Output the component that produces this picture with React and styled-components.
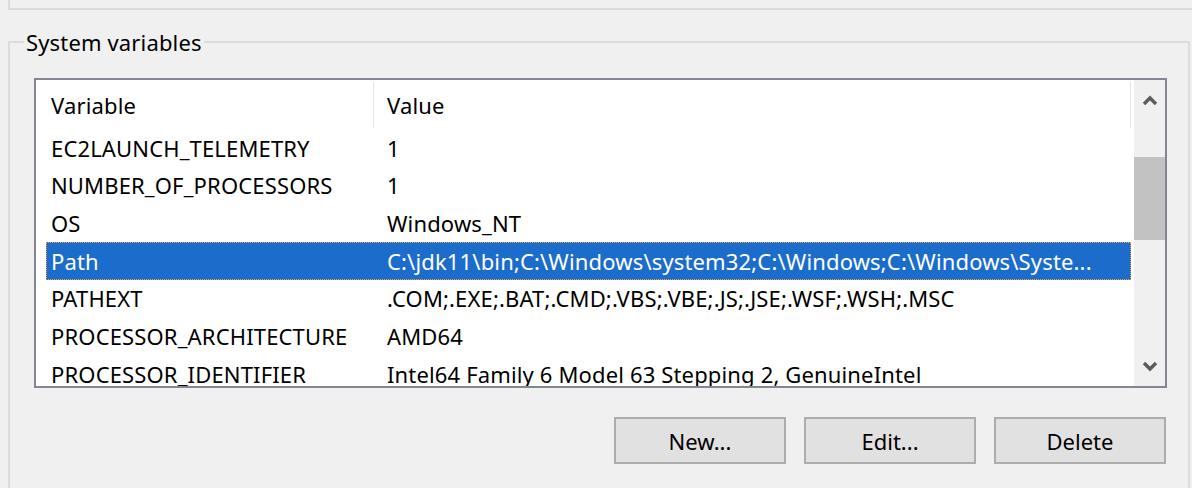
import React from "react";
import styled, { createGlobalStyle } from "styled-components";

const GlobalStyle = createGlobalStyle`
  html, body {
    margin: 0;
    padding: 0;
    background: #f0f0f0;
    overflow: hidden;
  }
  body {
    font-family: "Noto Sans", "Open Sans", "DejaVu Sans", sans-serif;
    font-size: 22px;
    letter-spacing: 0.15px;
    color: #000;
  }
`;

const Page = styled.div`
  width: 1192px;
  height: 488px;
  overflow: hidden;
`;

const TopGroup = styled.div`
  height: 8px;
  margin-left: 8px;
  border-left: 2px solid #dcdcdc;
  border-bottom: 2px solid #dcdcdc;
`;

const Group = styled.fieldset`
  margin: 18px 2px 0 8px;
  padding: 22px 21px 40px 24px;
  border: 2px solid #dcdcdc;
  min-width: 0;
`;

const Legend = styled.legend`
  margin-left: -10px;
  padding: 0 2px;
  line-height: 28px;
`;

const ListBox = styled.div`
  display: flex;
  height: 306px;
  border: 2px solid #828790;
  background: #fff;
`;

const Content = styled.div`
  flex: 1;
  min-width: 0;
  overflow: hidden;
`;

const Header = styled.div`
  display: flex;
  height: 49px;
  padding-right: 3px;
`;

const HeaderCell = styled.div`
  display: flex;
  align-items: center;
  width: ${(p) => (p.$width ? `${p.$width}px` : "auto")};
  flex: ${(p) => (p.$width ? "none" : 1)};
  padding-left: ${(p) => p.$pad}px;
  box-sizing: border-box;
  position: relative;

  &::after {
    content: "";
    position: absolute;
    right: 0;
    top: 2px;
    bottom: 1px;
    width: 1px;
    background: #e5e5e5;
  }
`;

const Rows = styled.div`
  padding: 0 3px 0 10px;
`;

const Row = styled.div`
  display: flex;
  align-items: center;
  height: 37.67px;
  box-sizing: border-box;
  white-space: nowrap;
  color: ${(p) => (p.$selected ? "#fff" : "#000")};
  background: ${(p) => (p.$selected ? "#1c6ccc" : "transparent")};
  border: 1px ${(p) => (p.$selected ? "dotted #f0a040" : "solid transparent")};
`;

const Cell = styled.div`
  width: ${(p) => (p.$width ? `${p.$width}px` : "auto")};
  flex: ${(p) => (p.$width ? "none" : 1)};
  min-width: 0;
  padding-left: ${(p) => p.$pad}px;
  box-sizing: border-box;
  overflow: hidden;
`;

const ScrollBar = styled.div`
  display: flex;
  flex-direction: column;
  width: 31px;
  background: #f0f0f0;
`;

const Arrow = styled.div`
  display: flex;
  align-items: center;
  justify-content: center;
  height: 40px;
  color: #5c5c5c;
`;

const Track = styled.div`
  flex: 1;
`;

const Thumb = styled.div`
  margin-top: 37px;
  height: 83px;
  background: #c2c2c2;
`;

const Buttons = styled.div`
  display: flex;
  justify-content: flex-end;
  gap: 18px;
  margin-top: 29px;
  padding-right: 1px;
`;

const Button = styled.button`
  width: 172px;
  height: 47px;
  border: 2px solid #adadad;
  background: #e1e1e1;
  font: inherit;
  color: #000;
  padding: 0;
`;

const Chevron = ({ up }) => (
  <svg width="16" height="11" viewBox="0 0 16 11">
    <path
      d={up ? "M2 9 L8 3 L14 9" : "M2 2 L8 8 L14 2"}
      fill="none"
      stroke="currentColor"
      strokeWidth="3.4"
    />
  </svg>
);

const rows = [
  ["EC2LAUNCH_TELEMETRY", "1"],
  ["NUMBER_OF_PROCESSORS", "1"],
  ["OS", "Windows_NT"],
  ["Path", "C:\\jdk11\\bin;C:\\Windows\\system32;C:\\Windows;C:\\Windows\\Syste..."],
  ["PATHEXT", ".COM;.EXE;.BAT;.CMD;.VBS;.VBE;.JS;.JSE;.WSF;.WSH;.MSC"],
  ["PROCESSOR_ARCHITECTURE", "AMD64"],
  ["PROCESSOR_IDENTIFIER", "Intel64 Family 6 Model 63 Stepping 2, GenuineIntel"],
];

export default function App() {
  return (
    <Page>
      <GlobalStyle />
      <TopGroup />
      <Group>
        <Legend>System variables</Legend>
        <ListBox>
          <Content>
            <Header>
              <HeaderCell $width={338} $pad={15}>Variable</HeaderCell>
              <HeaderCell $pad={13}>Value</HeaderCell>
            </Header>
            <Rows>
              {rows.map(([name, value]) => (
                <Row key={name} $selected={name === "Path"}>
                  <Cell $width={327} $pad={4}>{name}</Cell>
                  <Cell $pad={13}>{value}</Cell>
                </Row>
              ))}
            </Rows>
          </Content>
          <ScrollBar>
            <Arrow><Chevron up /></Arrow>
            <Track><Thumb /></Track>
            <Arrow><Chevron /></Arrow>
          </ScrollBar>
        </ListBox>
        <Buttons>
          <Button>New...</Button>
          <Button>Edit...</Button>
          <Button>Delete</Button>
        </Buttons>
      </Group>
    </Page>
  );
}
